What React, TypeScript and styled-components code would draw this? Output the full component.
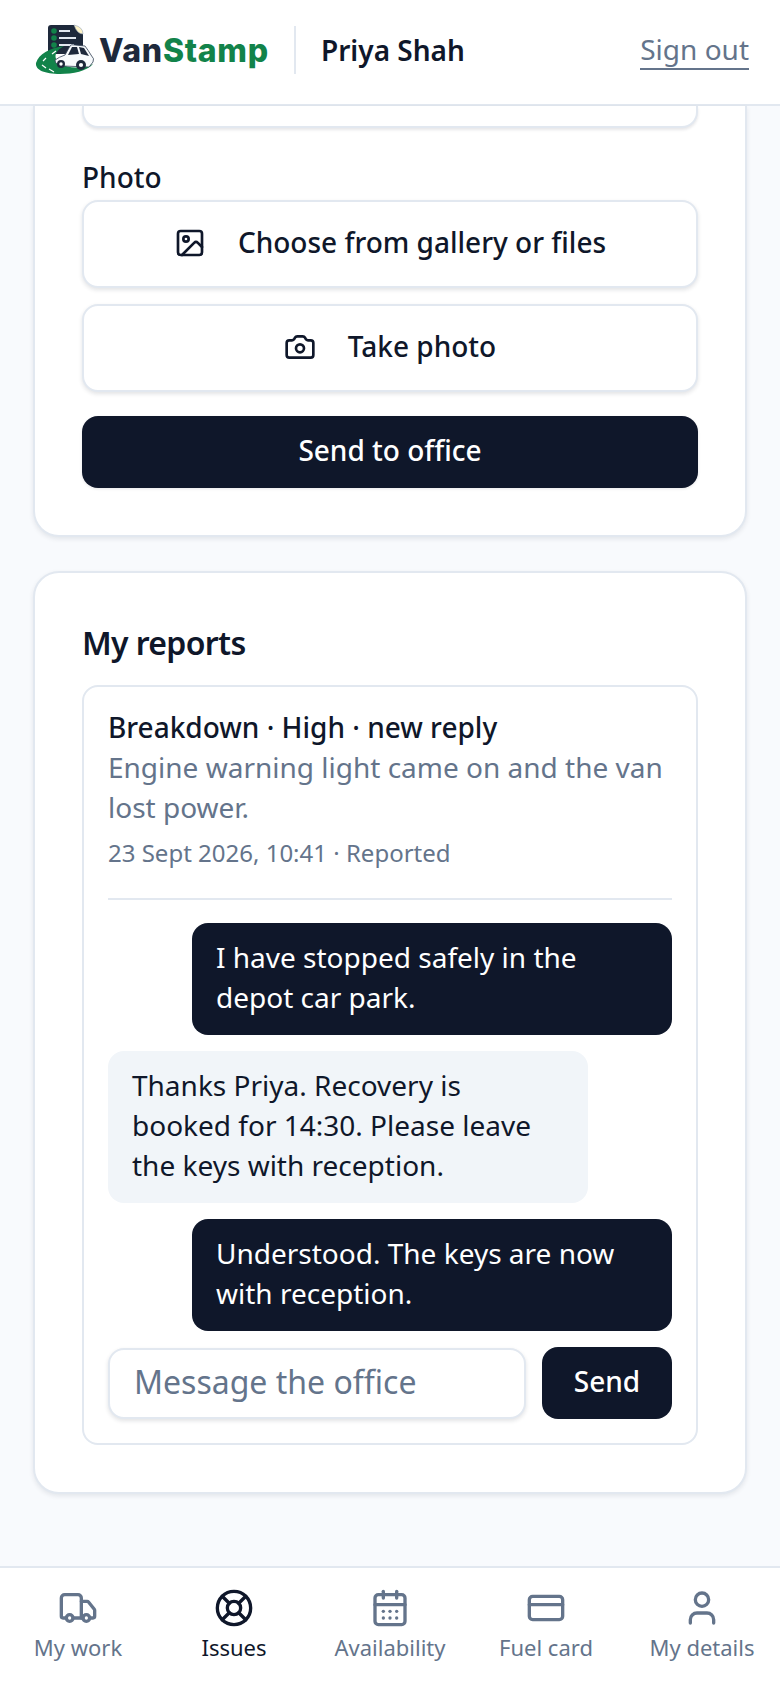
import React from "react";
import styled, { createGlobalStyle } from "styled-components";
import { Image as ImageIcon, Camera, Truck, LifeBuoy, CalendarDays, CreditCard, User } from "lucide-react";

const Global = createGlobalStyle`
  * { box-sizing: border-box; }
  html, body { margin: 0; padding: 0; background: #f8fafd; }
  body { font-family: "Noto Sans", "Liberation Sans", sans-serif; color: #0f172a; }
`;
const Shell = styled.div`
  width: 780px; height: 1688px; display: flex; flex-direction: column; overflow: hidden; background: #f8fafd;
`;
const Header = styled.header`
  height: 106px; flex: none; background: #fff; border-bottom: 2px solid #e2e8f0;
  display: flex; align-items: center; padding: 0 31px 4px 35px;
`;
const Logo = styled.div`
  display: flex; align-items: center; width: 259px; flex: none;
`;
const LogoWord = styled.span`
  font-family: Inter, sans-serif; font-weight: 800; font-size: 32px; letter-spacing: 0.7px; color: #1e293b; margin-left: 4px;
`;
const LogoGreen = styled.span` color: #12834a; `;
const Divider = styled.div` width: 2px; height: 48px; background: #e2e8f0; flex: none; `;
const UserName = styled.div` font-size: 28px; font-weight: 600; margin-left: 25px; flex: 1; color: #0f172a; `;
const SignOut = styled.a`
  font-size: 28px; color: #64748b; border-bottom: 2px solid #64748b; line-height: 34px; padding-bottom: 2px; margin-top: 1px;
`;
const Main = styled.main`
  flex: 1; min-height: 0; display: flex; flex-direction: column; gap: 34px; padding: 0 33px;
`;
const Card = styled.section<{ $cut?: boolean }>`
  background: #fff; border: 2px solid #e2e8f0; border-radius: 26px;
  padding: ${p => (p.$cut ? "0 47px 47px" : "48px 47px 47px")};
  box-shadow: 0 2px 5px rgba(15, 23, 42, 0.09);
  ${p => p.$cut && "border-top: 0; border-top-left-radius: 0; border-top-right-radius: 0;"}
`;
const TextareaStub = styled.div`
  height: 22px; background: #fff; border: 2px solid #e2e8f0; border-top: 0;
  border-radius: 0 0 16px 16px; box-shadow: 0 2px 3px rgba(15, 23, 42, 0.1);
`;
const Label = styled.div` font-size: 28px; font-weight: 500; line-height: 36px; margin-top: 31px; `;
const FileButton = styled.div`
  height: 88px; margin-top: 5px; padding-bottom: 2px; background: #fff; border: 2px solid #e2e8f0; border-radius: 16px;
  box-shadow: 0 2px 4px rgba(15, 23, 42, 0.12); display: flex; align-items: center; justify-content: center; gap: 32px;
  font-size: 28px; font-weight: 500; & + & { margin-top: 16px; }
`;
const FileButtonText = styled.span` display: block; padding-bottom: 2px; `;
const PrimaryButton = styled.div`
  height: 72px; margin-top: 24px; padding-bottom: 5px; background: #0f172a; color: #fff; border-radius: 16px;
  box-shadow: 0 1px 3px rgba(15, 23, 42, 0.1);
  display: flex; align-items: center; justify-content: center; font-size: 28px; font-weight: 500;
`;
const Title = styled.h2` font-size: 32px; line-height: 44px; font-weight: 600; margin: 0 0 20px; letter-spacing: -0.64px; `;
const Report = styled.div`
  border: 2px solid #e2e8f0; border-radius: 16px; padding: 20px 24px 24px; background: #fff;
`;
const ReportHead = styled.div` font-size: 28px; line-height: 40px; font-weight: 500; `;
const ReportBody = styled.div` font-size: 28px; line-height: 40px; color: #64748b; `;
const ReportMeta = styled.div` font-size: 24px; line-height: 34px; color: #64748b; margin-top: 9px; `;
const Rule = styled.div` height: 2px; background: #e2e8f0; margin: 28px 0 23px; `;
const Thread = styled.div` display: flex; flex-direction: column; gap: 16px; `;
const Bubble = styled.div<{ $mine?: boolean }>`
  width: 480px; padding: 14px 24px 18px; font-size: 28px; line-height: 40px; border-radius: 16px;
  align-self: ${p => (p.$mine ? "flex-end" : "flex-start")};
  background: ${p => (p.$mine ? "#0f172a" : "#f1f5f9")}; color: ${p => (p.$mine ? "#fff" : "#0f172a")};
`;
const Composer = styled.div` display: flex; gap: 16px; margin-top: 16px; `;
const MessageInput = styled.input`
  flex: 1; min-width: 0; height: 71px; margin-top: 1px; border: 2px solid #e2e8f0; border-radius: 16px; padding: 0 24px 4px; background: #fff;
  font: 400 32px "Noto Sans", sans-serif; box-shadow: 0 2px 4px rgba(15, 23, 42, 0.12); outline: none;
  &::placeholder { color: #64748b; opacity: 1; }
`;
const SendButton = styled.div`
  width: 130px; height: 72px; background: #0f172a; color: #fff; border-radius: 16px; display: flex; align-items: center; justify-content: center;
  font-size: 28px; font-weight: 500; padding-bottom: 5px;
`;
const Nav = styled.nav`
  height: 122px; flex: none; background: #fff; border-top: 2px solid #e2e8f0; display: grid; grid-template-columns: repeat(5, 1fr);
`;
const NavItem = styled.div<{ $active?: boolean }>`
  display: flex; flex-direction: column; align-items: center; padding-top: 20px; gap: 4px;
  font-size: 22px; line-height: 30px; color: ${p => (p.$active ? "#0f172a" : "#64748b")};
`;

const LogoMark = () => (
  <svg width="60" height="52" viewBox="0 0 60 52">
    <path d="M13 4 Q13 1 16 1 L39 1 L48 10 L48 30 L13 30 Z" fill="#1e293b" />
    <path d="M39 1 Q48 3 48 10 Q42 10 39 1 Z" fill="#fef3c7" stroke="#94a3b8" strokeWidth="0.6" />
    <circle cx="19" cy="7" r="2.8" fill="#12834a" />
    <circle cx="19" cy="14" r="2.8" fill="#12834a" />
    <circle cx="19" cy="21" r="2.8" fill="#12834a" />
    <rect x="24" y="6" width="11" height="2" fill="#e2e8f0" />
    <rect x="24" y="13" width="17" height="2" fill="#e2e8f0" />
    <rect x="24" y="20" width="15" height="2" fill="#e2e8f0" />
    <path d="M1 39 C4 30 14 24 29 22 C20 27 17 34 26 40 C34 45 48 44 58 40 C52 47 38 50 25 50 C10 50 0 46 1 39 Z" fill="#12834a" />
    <path d="M11 34 L8 37 M7 41 L11 44 M14 45 L19 48 M17 30 L21 27" stroke="#fff" strokeWidth="1.2" />
    <path d="M20 36 Q24 33 30 31 L35 22 Q36 20 40 21 L50 22 Q53 26 56 31 Q60 35 58 38 L54 43 L28 42 Q20 41 20 36 Z" fill="#f8fafc" stroke="#334155" strokeWidth="0.8" />
    <path d="M37 23 L42 23 L44 30 L33 31 Z M44 23 L49 24 L54 32 L46 30 Z" fill="#1e293b" />
    <circle cx="26" cy="40" r="4" fill="#1e293b" /><circle cx="26" cy="40" r="1.7" fill="#fff" />
    <circle cx="46" cy="41" r="5" fill="#1e293b" /><circle cx="46" cy="41" r="2.1" fill="#fff" />
  </svg>
);

export default function App() {
  return (
    <Shell>
      <Global />
      <Header>
        <Logo>
          <LogoMark />
          <LogoWord>Van<LogoGreen>Stamp</LogoGreen></LogoWord>
        </Logo>
        <Divider />
        <UserName>Priya Shah</UserName>
        <SignOut>Sign out</SignOut>
      </Header>
      <Main>
        <Card $cut>
          <TextareaStub />
          <Label>Photo</Label>
          <FileButton><ImageIcon size={32} strokeWidth={2} /><FileButtonText>Choose from gallery or files</FileButtonText></FileButton>
          <FileButton><Camera size={32} strokeWidth={2} /><FileButtonText>Take photo</FileButtonText></FileButton>
          <PrimaryButton>Send to office</PrimaryButton>
        </Card>
        <Card>
          <Title>My reports</Title>
          <Report>
            <ReportHead>Breakdown · High · new reply</ReportHead>
            <ReportBody>Engine warning light came on and the van lost power.</ReportBody>
            <ReportMeta>23 Sept 2026, 10:41 · Reported</ReportMeta>
            <Rule />
            <Thread>
              <Bubble $mine>I have stopped safely in the depot car park.</Bubble>
              <Bubble>Thanks Priya. Recovery is booked for 14:30. Please leave the keys with reception.</Bubble>
              <Bubble $mine>Understood. The keys are now with reception.</Bubble>
            </Thread>
            <Composer>
              <MessageInput placeholder="Message the office" readOnly />
              <SendButton>Send</SendButton>
            </Composer>
          </Report>
        </Card>
      </Main>
      <Nav>
        <NavItem><Truck size={40} strokeWidth={2} />My work</NavItem>
        <NavItem $active><LifeBuoy size={40} strokeWidth={2} />Issues</NavItem>
        <NavItem><CalendarDays size={40} strokeWidth={2} />Availability</NavItem>
        <NavItem><CreditCard size={40} strokeWidth={2} />Fuel card</NavItem>
        <NavItem><User size={40} strokeWidth={2} />My details</NavItem>
      </Nav>
    </Shell>
  );
}
